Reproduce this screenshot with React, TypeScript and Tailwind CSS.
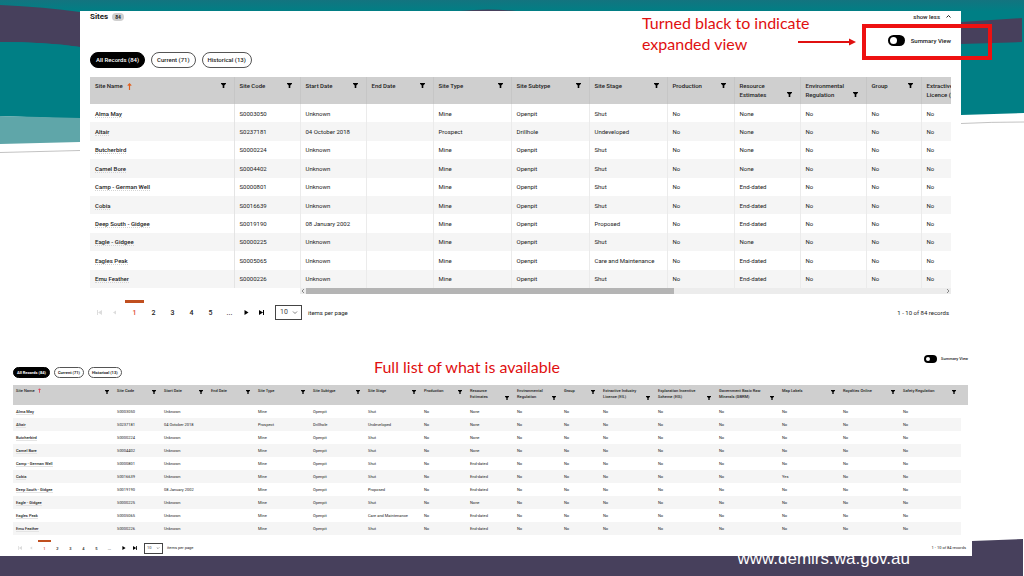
import { Fragment } from "react";
import { clsx } from "clsx";

type Size = "lg" | "sm";

interface Column {
  title: string[];
  lg: string;
  sm: string;
  sorted?: boolean;
}

const COLUMNS: Column[] = [
  { title: ["Site Name"], lg: "w-[144px]", sm: "w-[101px]", sorted: true },
  { title: ["Site Code"], lg: "w-[66px]", sm: "w-[47px]" },
  { title: ["Start Date"], lg: "w-[66px]", sm: "w-[47px]" },
  { title: ["End Date"], lg: "w-[67px]", sm: "w-[47px]" },
  { title: ["Site Type"], lg: "w-[78px]", sm: "w-[55px]" },
  { title: ["Site Subtype"], lg: "w-[78px]", sm: "w-[55px]" },
  { title: ["Site Stage"], lg: "w-[78px]", sm: "w-[56px]" },
  { title: ["Production"], lg: "w-[67px]", sm: "w-[46px]" },
  { title: ["Resource", "Estimates"], lg: "w-[66px]", sm: "w-[47px]" },
  { title: ["Environmental", "Regulation"], lg: "w-[66px]", sm: "w-[47px]" },
  { title: ["Group"], lg: "w-[55px]", sm: "w-[39px]" },
  { title: ["Extractive Industry", "Licence (EIL)"], lg: "w-[78px]", sm: "w-[55px]" },
  { title: ["Exploration Incentive", "Scheme (EIS)"], lg: "w-[86px]", sm: "w-[61px]" },
  { title: ["Government Basic Raw", "Minerals (GBRM)"], lg: "w-[89px]", sm: "w-[63px]" },
  { title: ["Map Labels"], lg: "w-[86px]", sm: "w-[61px]" },
  { title: ["Royalties Online"], lg: "w-[86px]", sm: "w-[60px]" },
  { title: ["Safety Regulation"], lg: "w-[86px]", sm: "w-[61px]" },
];

const VISIBLE_COLUMNS = 12;

interface Site {
  name: string;
  code: string;
  start?: string;
  type?: string;
  subtype?: string;
  stage?: string;
  estimates?: string;
  mapLabels?: string;
}

const SITES: Site[] = [
  { name: "Alma May", code: "S0003050" },
  { name: "Altair", code: "S0237181", start: "04 October 2018", type: "Prospect", subtype: "Drillhole", stage: "Undeveloped" },
  { name: "Butcherbird", code: "S0000224" },
  { name: "Camel Bore", code: "S0004402" },
  { name: "Camp - German Well", code: "S0000801", estimates: "End-dated" },
  { name: "Cobia", code: "S0016639", estimates: "End-dated", mapLabels: "Yes" },
  { name: "Deep South - Gidgee", code: "S0019190", start: "08 January 2002", stage: "Proposed", estimates: "End-dated" },
  { name: "Eagle - Gidgee", code: "S0000225" },
  { name: "Eagles Peak", code: "S0005065", stage: "Care and Maintenance", estimates: "End-dated" },
  { name: "Emu Feather", code: "S0000226", estimates: "End-dated" },
];

function cellsOf(site: Site) {
  return [
    site.code,
    site.start ?? "Unknown",
    "",
    site.type ?? "Mine",
    site.subtype ?? "Openpit",
    site.stage ?? "Shut",
    "No",
    site.estimates ?? "None",
    "No",
    "No",
    "No",
    "No",
    "No",
    site.mapLabels ?? "No",
    "No",
    "No",
  ];
}

function FilterIcon({ className }: { className: string }) {
  return (
    <svg viewBox="0 0 10 10" className={className} fill="currentColor" aria-hidden="true">
      <path d="M0 0h10v1.6L6.6 5v5H3.4V5L0 1.6z" />
    </svg>
  );
}

function SitesTable({ size }: { size: Size }) {
  const lg = size === "lg";
  const columns = lg ? COLUMNS.slice(0, VISIBLE_COLUMNS) : COLUMNS;
  return (
    <table
      className={clsx(
        "table-fixed border-collapse text-left text-[#222]",
        lg ? "h-[211px] w-[909px] text-[6px] leading-[9px]" : "w-[955px] text-[4px] leading-[6px]"
      )}
    >
      <thead>
        <tr className={clsx("bg-[#cfcfcf] align-top", lg ? "h-[27px]" : "h-5")}>
          {columns.map((col) => (
            <th
              key={col.title[0]}
              className={clsx(
                "font-medium whitespace-nowrap",
                lg ? "border-r border-[#c6c6c6] pt-1 pr-2 pl-[5px]" : "pt-[3px] pr-[5px] pl-[3px]",
                lg ? col.lg : col.sm
              )}
            >
              <div className="flex items-end justify-between">
                <span>
                  {col.title.map((line, i) => (
                    <Fragment key={line}>
                      {i > 0 && <br />}
                      {line}
                    </Fragment>
                  ))}
                  {col.sorted && (
                    <svg
                      viewBox="0 0 8 12"
                      className={clsx("inline-block", lg ? "ml-1 h-[7px] w-[5px]" : "ml-[3px] h-[5px] w-[3px]")}
                      fill="none"
                      stroke={lg ? "#e2601f" : "#e0304a"}
                      strokeWidth="2"
                      aria-hidden="true"
                    >
                      <path d="M4 12V1.5M1 4.5l3-3 3 3" />
                    </svg>
                  )}
                </span>
                <button type="button" aria-label={`Filter ${col.title.join(" ")}`} className="shrink-0 text-black">
                  <FilterIcon className={lg ? "mb-[2px] size-[5px]" : "size-1"} />
                </button>
              </div>
            </th>
          ))}
          {!lg && <td className="w-[7px]" />}
        </tr>
      </thead>
      <tbody>
        {SITES.map((site, row) => (
          <tr key={site.code} className={lg ? "" : "h-[13px]"}>
            <td className={clsx(row % 2 === 1 && "bg-[#f5f5f5]", lg ? "border-r border-[#e4e4e4] pl-[5px]" : "pl-[3px]")}>
              <a
                href="#site"
                className={clsx("font-medium", lg && "border-b border-dotted border-[#d4d4d4]", !lg && "border-b border-[#e4e4e4]")}
              >
                {site.name}
              </a>
            </td>
            {cellsOf(site)
              .slice(0, columns.length - 1)
              .map((value, i) => (
                <td
                  key={i}
                  className={clsx(
                    "whitespace-nowrap",
                    row % 2 === 1 && "bg-[#f5f5f5]",
                    lg ? "border-r border-[#ebebeb] pl-[5px]" : "pl-[3px]"
                  )}
                >
                  {value}
                </td>
              ))}
          </tr>
        ))}
      </tbody>
    </table>
  );
}

function RecordTabs({ size }: { size: Size }) {
  const lg = size === "lg";
  const tabs = ["All Records (84)", "Current (71)", "Historical (13)"];
  return (
    <div className={clsx("flex", lg ? "gap-[6px]" : "gap-1")}>
      {tabs.map((tab, i) => (
        <button
          key={tab}
          type="button"
          className={clsx(
            "rounded-full border whitespace-nowrap",
            lg ? "h-4 px-[5px] text-[6px] leading-[14px] font-medium" : "h-[11px] px-[3px] text-[4px] leading-[9px] font-bold",
            i === 0 ? "border-black bg-black text-white" : "border-[#555] bg-white text-[#222]"
          )}
        >
          {tab}
        </button>
      ))}
    </div>
  );
}

function SummaryToggle({ size }: { size: Size }) {
  const lg = size === "lg";
  return (
    <label className={clsx("flex items-center font-medium text-[#222]", lg ? "gap-[6px] text-[6px]" : "gap-1 text-[4px]")}>
      <span className="relative flex">
        <input
          type="checkbox"
          role="switch"
          className={clsx("appearance-none rounded-full bg-black", lg ? "h-[11px] w-[17px]" : "h-2 w-[13px]")}
        />
        <span
          className={clsx(
            "pointer-events-none absolute rounded-full bg-white",
            lg ? "top-[2px] left-[2px] size-[7px]" : "top-[2px] left-[2px] size-1"
          )}
        />
      </span>
      Summary View
    </label>
  );
}

function Pager({ size }: { size: Size }) {
  const lg = size === "lg";
  const step = lg ? "w-[15px]" : "w-[11px]";
  const page = lg ? "w-[19px]" : "w-[13px]";
  const icon = lg ? "size-[5px]" : "size-1";
  return (
    <nav
      aria-label="Pages"
      className={clsx("flex items-center text-[#222]", lg ? "h-6 pl-[2px] text-[6px]" : "h-4 pl-px text-[4px]")}
    >
      <button type="button" aria-label="First page" className={clsx("flex justify-center text-[#ddd]", step)}>
        <svg viewBox="0 0 10 10" className={icon} fill="currentColor">
          <path d="M0 0h2v10H0zM10 0v10L2 5z" />
        </svg>
      </button>
      <button type="button" aria-label="Previous page" className={clsx("flex justify-center text-[#ddd]", step)}>
        <svg viewBox="0 0 10 10" className={icon} fill="currentColor">
          <path d="M8 1v8L2 5z" />
        </svg>
      </button>
      <div className={clsx("flex self-stretch", lg ? "ml-[3px]" : "ml-[2px]")}>
        {["1", "2", "3", "4", "5", "..."].map((n, i) => (
          <button
            key={n}
            type="button"
            className={clsx(
              "font-medium",
              lg ? "border-t-3 text-[7px]" : "border-t-2 text-[4px]",
              page,
              i === 0 ? "border-[#c04f1f] text-[#e0492f]" : "border-transparent"
            )}
          >
            {n}
          </button>
        ))}
      </div>
      <button type="button" aria-label="Next page" className={clsx("flex justify-center text-black", step, !lg && "ml-[2px]")}>
        <svg viewBox="0 0 10 10" className={icon} fill="currentColor">
          <path d="M1 0v10l8-5z" />
        </svg>
      </button>
      <button type="button" aria-label="Last page" className={clsx("flex justify-center text-black", step)}>
        <svg viewBox="0 0 10 10" className={icon} fill="currentColor">
          <path d="M0 0v10l8-5zM8 0h2v10H8z" />
        </svg>
      </button>
      <label className={clsx("flex items-center", lg ? "ml-[6px] gap-[6px]" : "ml-1 gap-1")}>
        <span className="relative flex items-center">
          <select
            className={clsx(
              "appearance-none border border-[#444] bg-white text-[#444]",
              lg ? "h-[15px] w-[27px] pl-1 text-[7px]" : "h-[11px] w-[19px] pl-[2px] text-[4px]"
            )}
          >
            <option>10</option>
          </select>
          <svg
            viewBox="0 0 10 6"
            className={clsx("pointer-events-none absolute", lg ? "right-1 h-[3px] w-[6px]" : "right-[3px] h-[2px] w-1")}
            fill="none"
            stroke="#555"
            strokeWidth="1.5"
          >
            <path d="M1 1l4 4 4-4" />
          </svg>
        </span>
        items per page
      </label>
      <span className="ml-auto">1 - 10 of 84 records</span>
    </nav>
  );
}

function Waves() {
  return (
    <svg
      viewBox="0 0 1024 576"
      preserveAspectRatio="none"
      className="absolute inset-0 h-full w-full"
      aria-hidden="true"
    >
      <defs>
        <linearGradient id="teal" x1="0" y1="0" x2="0" y2="1">
          <stop offset="0" stopColor="#13747f" />
          <stop offset="0.1" stopColor="#007f85" />
          <stop offset="1" stopColor="#007f85" />
        </linearGradient>
      </defs>
      <path d="M0 0h1024v113L961 115H0z" fill="url(#teal)" />
      <path d="M0 5Q45 7 80 12V47Q45 42 0 42z" fill="#47405c" />
      <path d="M460 11Q488 8 516 11z" fill="#47405c" />
      <path d="M0 42Q45 42 80 47V119L0 116z" fill="#007f85" />
      <path d="M0 116L80 118V142L0 144z" fill="#5fa6a9" />
      <path d="M0 152.500L80 150.500" stroke="#999" strokeWidth="0.600" />
      <path d="M961 22L1022 18V42L961 44z" fill="#47405c" />
      <path d="M961 123.500Q990 122 1024 122" stroke="#999" strokeWidth="0.600" fill="none" />
      <path d="M0 550L972 541L1023 539V576H0z" fill="#47405c" />
    </svg>
  );
}

export default function App() {
  return (
    <div className="relative flex min-h-screen w-full flex-col overflow-hidden bg-white font-[Roboto,sans-serif]">
      <Waves />

      <section className="relative mt-[11px] mr-[63px] ml-20 bg-white px-[10px]">
        <header className="flex h-[11px] items-center text-[#222]">
          <h2 className="text-[8px] font-bold">Sites</h2>
          <span className="ml-1 rounded-full bg-[#cfcfcf] px-[3px] text-[5px] leading-2 font-bold">84</span>
          <button type="button" className="ml-auto flex items-center gap-[6px] text-[6px] font-medium">
            show less
            <svg viewBox="0 0 10 6" className="h-[3px] w-[5px]" fill="none" stroke="currentColor" strokeWidth="2">
              <path d="M1 5l4-4 4 4" />
            </svg>
          </button>
        </header>
        <div className="mt-[13px] flex justify-end">
          <SummaryToggle size="lg" />
        </div>
        <div className="mt-[6px]">
          <RecordTabs size="lg" />
        </div>
        <div className="mt-[9px] overflow-hidden">
          <SitesTable size="lg" />
        </div>
        <div className="ml-[210px] flex h-[6px] items-center bg-[#ececec] text-[#888]">
          <svg viewBox="0 0 6 6" className="size-[6px]" fill="none" stroke="currentColor">
            <path d="M4 1L2 3l2 2" />
          </svg>
          <div className="h-full w-[368px] bg-[#b4b4b4]" />
          <svg viewBox="0 0 6 6" className="ml-auto size-[6px]" fill="none" stroke="currentColor">
            <path d="M2 1l2 2-2 2" />
          </svg>
        </div>
        <div className="mt-[6px] pr-[2px]">
          <Pager size="lg" />
        </div>

        {/* Callout over the toggle */}
        <p className="absolute top-px right-[105px] w-[214px] font-[Lato,sans-serif] text-[16px] leading-[21px] text-[#e01010]">
          Turned black to indicate
          <br />
          expanded view
        </p>
        <svg viewBox="0 0 58 8" className="absolute top-[27px] right-[105px] h-2 w-[58px]" aria-hidden="true">
          <path d="M0 4h52" stroke="#e01010" strokeWidth="2" />
          <path d="M51 0.500L58 4l-7 3.500z" fill="#e01010" />
        </svg>
        <div className="absolute top-[13px] right-[-31px] h-9 w-[130px] border-4 border-[#ee1111]" />
      </section>

      {/* Every column at once */}
      <section className="relative mt-[31px] mr-[52px] bg-white pl-[13px]">
        <p className="absolute top-px left-[374px] font-[Lato,sans-serif] text-[16px] leading-[21px] text-[#e01010]">
          Full list of what is available
        </p>
        <div className="mr-1 flex justify-end">
          <SummaryToggle size="sm" />
        </div>
        <div className="mt-1">
          <RecordTabs size="sm" />
        </div>
        <div className="mt-[7px]">
          <SitesTable size="sm" />
        </div>
        <div className="mt-[5px] pr-[6px]">
          <Pager size="sm" />
        </div>
      </section>

      <footer className="relative -mt-2 mr-[114px] flex justify-end">
        <a
          href="#home"
          className="font-['Liberation_Sans',sans-serif] text-[17px] leading-[22px] text-white [clip-path:inset(8px_0_0_0)]"
        >
          www.demirs.wa.gov.au
        </a>
      </footer>
    </div>
  );
}
